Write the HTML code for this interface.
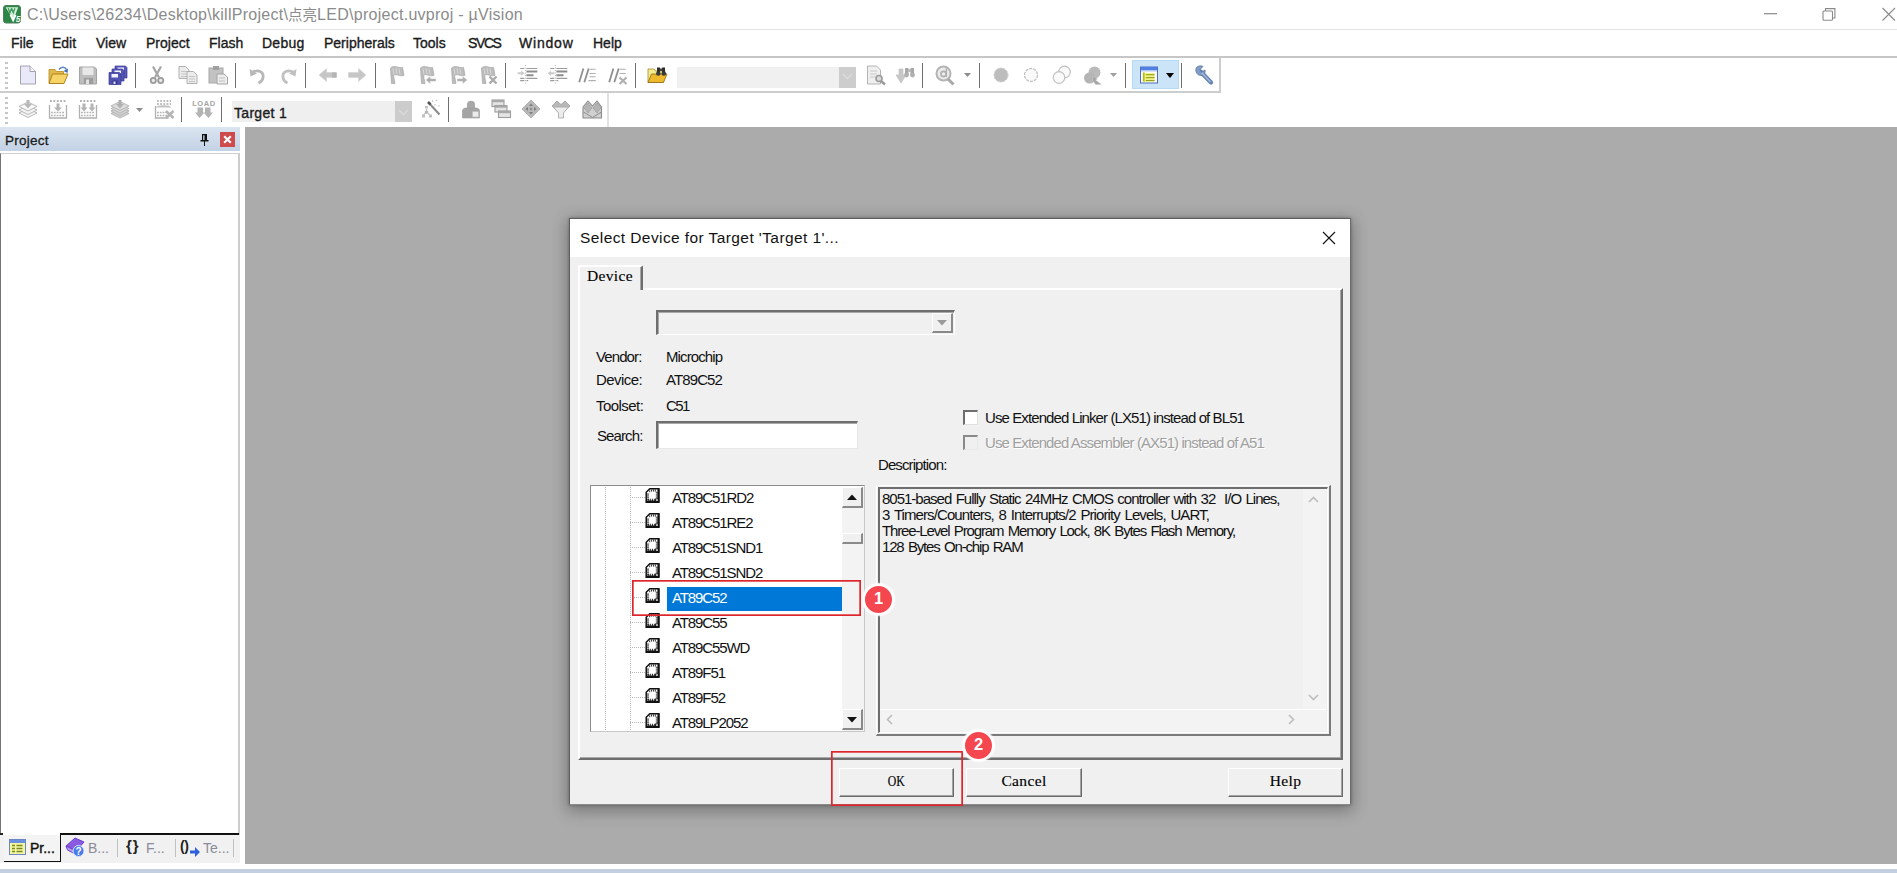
<!DOCTYPE html>
<html lang="en">
<head>
<meta charset="utf-8">
<title>uVision - Select Device</title>
<style>
*{box-sizing:border-box;margin:0;padding:0}
html,body{width:1897px;height:873px;overflow:hidden;background:#fff}
body{position:relative;font-family:"Liberation Sans","Noto Sans CJK SC",sans-serif;font-size:15px;color:#000}
.abs{position:absolute}
.t{position:absolute;white-space:nowrap;line-height:20px;height:20px}
/* main window */
#titletext{left:27px;top:4.500px;font-size:16px;color:#8b8b8b;letter-spacing:.27px}
#menubar .t{top:33px;font-size:14px;color:#1a1a1a;-webkit-text-stroke:0.35px #1a1a1a}
.tsep{position:absolute;width:1.400px;height:25px;background:#6f6f6f}
.grip{position:absolute;width:3px;border-left:3px dotted #c4c4c4}
svg{position:absolute;overflow:visible}
/* dialog */
#dlg{left:569px;top:218px;width:782px;height:587px;background:#f0f0f0;border:1px solid #5e5e5e;border-bottom-color:#8c8c8c;border-right-color:#6c6c6c;box-shadow:0 4px 15px 2px rgba(0,0,0,.30),0 0 3px rgba(0,0,0,.3)}
.ms{font-size:15px;color:#111;letter-spacing:-0.9px}
.sim{font-family:"Liberation Serif","Noto Serif CJK SC",serif;font-size:15.500px;color:#000;-webkit-text-stroke:0.15px #000;letter-spacing:.35px}
.btn{position:absolute;height:29px;background:#f0f0f0;border-top:1px solid #fff;border-left:1px solid #fff;border-right:1px solid #6a6a6a;border-bottom:1px solid #6a6a6a;box-shadow:inset -1px -1px 0 #a2a2a2;text-align:center;line-height:24px}
.tree{font-size:15px;color:#111;letter-spacing:-1.1px}
.chip{position:absolute;width:15px;height:15px}
.hdot{position:absolute;height:1px;width:15px;left:630px;background:repeating-linear-gradient(90deg,#b8b8b8 0 1px,transparent 1px 2px)}
.red{position:absolute;border:1.5px solid #dc262c}
.badge{position:absolute;width:31px;height:31px;border-radius:50%;background:#f5474f;border:2px solid #fff;box-shadow:0 0 1.5px 1px #fff;color:#fff;font-size:16.5px;font-weight:bold;text-align:center;line-height:24px}
</style>
</head>
<body>
<!-- ===== title bar ===== -->
<div class="abs" id="titlebar" style="left:0;top:0;width:1897px;height:29px;background:#fff"></div>
<svg style="left:3px;top:4.500px" width="18" height="18.500" viewBox="0 0 18 18.500"><rect x=".5" y=".5" width="17" height="17.500" rx="2.500" fill="#2c8747" stroke="#4d7f5c"/><path d="M2.600 2.200H15.200L10.400 14.800z" fill="#d3eed9"/><path d="M5.300 3.200l1.600 4.600 1.700-4.600M8.600 3.200l1.700 4.600 1.600-4.600" fill="none" stroke="#3f9a5b" stroke-width="1.300"/><path d="M7.400 9.800l2.700 5.600 2.600-5.600" fill="none" stroke="#fff" stroke-width="1.700"/><text x="12.700" y="16.600" font-size="8.500" font-weight="bold" font-style="italic" fill="#e9f8ec" font-family="Liberation Sans, sans-serif">5</text></svg>
<svg style="left:1764px;top:13px" width="14" height="2" viewBox="0 0 14 2"><path d="M0 .7h13" stroke="#8a8a8a" stroke-width="1.200"/></svg>
<svg style="left:1822px;top:8px" width="14" height="13" viewBox="0 0 14 13"><path d="M3.500 3V.6h9.400V10H10.500" fill="none" stroke="#8a8a8a" stroke-width="1.100"/><rect x="1" y="3" width="9.500" height="9.300" rx="1" fill="#fff" stroke="#8a8a8a" stroke-width="1.100"/></svg>
<svg style="left:1882px;top:8px" width="15" height="13" viewBox="0 0 15 13"><path d="M.5 0l12.500 12.500M13 0L.5 12.500" stroke="#8a8a8a" stroke-width="1.100"/></svg>
<div class="t" id="titletext">C:\Users\26234\Desktop\killProject\<span style="font-size:14.500px;letter-spacing:0">点亮</span>LED\project.uvproj - µVision</div>
<div class="abs" style="left:0;top:29px;width:1897px;height:1px;background:#e4e4e4"></div>
<!-- ===== menu bar ===== -->
<div id="menubar">
<div class="t" style="left:11px">File</div>
<div class="t" style="left:52px">Edit</div>
<div class="t" style="left:96px">View</div>
<div class="t" style="left:146px">Project</div>
<div class="t" style="left:209px">Flash</div>
<div class="t" style="left:262px;letter-spacing:.25px">Debug</div>
<div class="t" style="left:324px">Peripherals</div>
<div class="t" style="left:413px">Tools</div>
<div class="t" style="left:468px;letter-spacing:-1.4px">SVCS</div>
<div class="t" style="left:519px;letter-spacing:.8px">Window</div>
<div class="t" style="left:593px">Help</div>
</div>
<div class="abs" style="left:0;top:56px;width:1897px;height:2px;background:#c6c6c6"></div>
<!-- ===== toolbars ===== -->
<div class="abs" id="tb1" style="left:0;top:58px;width:1221px;height:35px;background:#fff;border-right:2px solid #cdcdcd;border-bottom:2px solid #cdcdcd"></div>
<div class="abs" id="tb2" style="left:0;top:93px;width:609px;height:34px;background:#fff;border-right:2px solid #e2e2e2"></div>
<!-- TB-START -->
<div class="abs" style="left:5px;top:62px;width:2.500px;height:27px;background:repeating-linear-gradient(180deg,#c6c6c6 0 2px,transparent 2px 5px)"></div>
<div class="abs" style="left:5px;top:97px;width:2.500px;height:27px;background:repeating-linear-gradient(180deg,#c6c6c6 0 2px,transparent 2px 5px)"></div>
<div class="tsep" style="left:135px;top:63px"></div>
<div class="tsep" style="left:235px;top:63px"></div>
<div class="tsep" style="left:305px;top:63px"></div>
<div class="tsep" style="left:375px;top:63px"></div>
<div class="tsep" style="left:505px;top:63px"></div>
<div class="tsep" style="left:635px;top:63px"></div>
<div class="tsep" style="left:922px;top:63px"></div>
<div class="tsep" style="left:978.7px;top:63px"></div>
<div class="tsep" style="left:1125px;top:63px"></div>
<div class="tsep" style="left:1181px;top:63px"></div>
<div class="tsep" style="left:181px;top:97px;height:25px"></div>
<div class="tsep" style="left:221px;top:97px;height:25px"></div>
<div class="tsep" style="left:448px;top:97px;height:25px"></div>
<svg style="left:18px;top:64.5px" width="20" height="20" viewBox="0 0 20 20"><path d="M2.500 1h9.500l5.500 5.500V19h-15z" fill="#e9e9fa" stroke="#a2a2b0"/><path d="M12 1v5.500h5.500" fill="#f6f6ff" stroke="#a2a2b0"/></svg>
<svg style="left:47.5px;top:65px" width="20" height="20" viewBox="0 0 20 20"><path d="M1 4.500h6l1.500 2h7V18H1z" fill="#e2b94a" stroke="#b28a22" stroke-width=".8"/><path d="M1 18.500l3.500-9.500H20l-4 9.500z" fill="#f7d468" stroke="#a67c14" stroke-width=".9"/><path d="M11 4.500c2-3 6-3 7.500 0" fill="none" stroke="#5a86c8" stroke-width="1.600"/><path d="M20 3.500l-.5 4.500-4-2z" fill="#3f6fb8"/></svg>
<svg style="left:77.5px;top:65px" width="20" height="20" viewBox="0 0 20 20"><path d="M1.500 2h15l2 2v15h-17z" fill="#bdbdbd" stroke="#a4a4a4"/><rect x="4.500" y="2.500" width="11" height="7.500" fill="#e8e8e8"/><rect x="6" y="13" width="9" height="6" fill="#9c9c9c"/><rect x="8" y="14.500" width="3" height="4.500" fill="#e0e0e0"/></svg>
<svg style="left:107.5px;top:65px" width="20" height="20" viewBox="0 0 20 20"><g transform="translate(7,1)"><path d="M0 0h10.500l1.500 1.500V12H0z" fill="#5858b8" stroke="#3a3a98" stroke-width=".7"/><rect x="2.500" y="1.500" width="6.500" height="3.500" fill="#f2f2ff"/><rect x="3.500" y="8" width="5" height="4" fill="#3a3a90"/><rect x="4.500" y="9" width="2" height="2.500" fill="#e4e4ff"/></g><g transform="translate(4,4)"><path d="M0 0h10.500l1.500 1.500V12H0z" fill="#5555b4" stroke="#3a3a98" stroke-width=".7"/><rect x="2.500" y="1.500" width="6.500" height="3.500" fill="#f2f2ff"/><rect x="3.500" y="8" width="5" height="4" fill="#3a3a90"/><rect x="4.500" y="9" width="2" height="2.500" fill="#e4e4ff"/></g><g transform="translate(1,7.5)"><path d="M0 0h10.500l1.500 1.500V12H0z" fill="#5050b0" stroke="#3a3a98" stroke-width=".7"/><rect x="2.500" y="1.500" width="6.500" height="3.500" fill="#f2f2ff"/><rect x="3.500" y="8" width="5" height="4" fill="#3a3a90"/><rect x="4.500" y="9" width="2" height="2.500" fill="#e4e4ff"/></g></svg>
<svg style="left:147px;top:65px" width="20" height="20" viewBox="0 0 20 20"><path d="M6 1.500l6 11M14 1.500l-6 11" stroke="#a6a6a6" stroke-width="2.200" fill="none"/><circle cx="6.300" cy="15.500" r="2.600" fill="#e8e8e8" stroke="#9c9c9c" stroke-width="1.800"/><circle cx="13.700" cy="15.500" r="2.600" fill="#e8e8e8" stroke="#9c9c9c" stroke-width="1.800"/></svg>
<svg style="left:178px;top:65px" width="20" height="20" viewBox="0 0 20 20"><g transform="translate(1,1.5)"><path d="M0 0h6.500l3.500 3.500V12H0z" fill="#ececec" stroke="#b0b0b0"/><path d="M2 5h6M2 7.500h6M2 10h6" stroke="#c4c4c4"/></g><g transform="translate(9,6.5)"><path d="M0 0h6.500l3.500 3.500V12H0z" fill="#ececec" stroke="#b0b0b0"/><path d="M2 5h6M2 7.500h6M2 10h6" stroke="#c4c4c4"/></g></svg>
<svg style="left:207.5px;top:65px" width="20" height="20" viewBox="0 0 20 20"><rect x="1" y="3" width="14" height="15" fill="#c2c2c2" stroke="#a8a8a8"/><rect x="5" y="1" width="6" height="4" fill="#a0a0a0"/><path d="M9 9h7l3.500 3V19H9z" fill="#ececec" stroke="#a4a4a4"/><path d="M11 13h6M11 16h6" stroke="#c0c0c0"/></svg>
<svg style="left:247.5px;top:65px" width="20" height="20" viewBox="0 0 20 20"><path d="M4 7.500c6-3.500 12-1 11 5-.4 2.500-2 4.500-4.500 5.500" fill="none" stroke="#b8b8b8" stroke-width="2.800"/><path d="M1.500 4l1 7.500 6.500-3z" fill="#b8b8b8"/></svg>
<svg style="left:278px;top:65px" width="20" height="20" viewBox="0 0 20 20"><path d="M16 7.500c-6-3.500-12-1-11 5 .4 2.500 2 4.500 4.500 5.500" fill="none" stroke="#c0c0c0" stroke-width="2.800"/><path d="M18.500 4l-1 7.500-6.500-3z" fill="#c0c0c0"/></svg>
<svg style="left:317.5px;top:64.5px" width="20" height="20" viewBox="0 0 20 20"><path d="M1 10L8.500 3.500V7.500H18.500V12.500H8.500V16.500z" fill="#c6c6c6" stroke="#d4d4d4" stroke-width=".6"/><rect x="14" y="7.500" width="4.500" height="5" fill="#b4b4b4"/></svg>
<svg style="left:347px;top:64.5px" width="20" height="20" viewBox="0 0 20 20"><path d="M19 10L11.500 3.500V7.500H1.500V12.500H11.500V16.500z" fill="#c6c6c6" stroke="#d4d4d4" stroke-width=".6"/></svg>
<svg style="left:387px;top:65px" width="20" height="20" viewBox="0 0 20 20"><path d="M3.500 3c3-2.500 5.500-1.500 7-1 2 .7 3.500.8 5 .3l1.500 8c-2 .8-4 .6-6-.2-1.500-.6-3-.6-4.500.4L8 18.500H4.500z" fill="#bcbcbc" stroke="#a8a8a8" stroke-width=".7"/><path d="M6 3.500l1 6M9 3l1 6M12 3.500l1 6" stroke="#d8d8d8" stroke-width="1"/></svg>
<svg style="left:417px;top:65px" width="20" height="20" viewBox="0 0 20 20"><path d="M3.500 3c3-2.500 5.500-1.500 7-1 2 .7 3.500.8 5 .3l1.500 8c-2 .8-4 .6-6-.2-1.500-.6-3-.6-4.500.4L8 18.500H4.500z" fill="#bcbcbc" stroke="#a8a8a8" stroke-width=".7"/><path d="M6 3.500l1 6M9 3l1 6M12 3.500l1 6" stroke="#d8d8d8" stroke-width="1"/><path d="M8.500 15l5-4v2.500H19v3h-5.500V19z" fill="#b0b0b0" stroke="#fff" stroke-width=".5"/></svg>
<svg style="left:447.5px;top:65px" width="20" height="20" viewBox="0 0 20 20"><path d="M3.500 3c3-2.500 5.500-1.500 7-1 2 .7 3.500.8 5 .3l1.500 8c-2 .8-4 .6-6-.2-1.500-.6-3-.6-4.500.4L8 18.500H4.500z" fill="#bcbcbc" stroke="#a8a8a8" stroke-width=".7"/><path d="M6 3.500l1 6M9 3l1 6M12 3.500l1 6" stroke="#d8d8d8" stroke-width="1"/><path d="M19.500 15l-5-4v2.500H9v3h5.500V19z" fill="#b0b0b0" stroke="#fff" stroke-width=".5"/></svg>
<svg style="left:478px;top:65px" width="20" height="20" viewBox="0 0 20 20"><path d="M3.500 3c3-2.500 5.500-1.500 7-1 2 .7 3.500.8 5 .3l1.500 8c-2 .8-4 .6-6-.2-1.500-.6-3-.6-4.500.4L8 18.500H4.500z" fill="#bcbcbc" stroke="#a8a8a8" stroke-width=".7"/><path d="M6 3.500l1 6M9 3l1 6M12 3.500l1 6" stroke="#d8d8d8" stroke-width="1"/><path d="M11.500 11.500l7 7M18.500 11.500l-7 7" stroke="#aaaaaa" stroke-width="2.400"/></svg>
<svg style="left:518px;top:65px" width="20" height="20" viewBox="0 0 20 20"><path d="M2.200 3.500H6.300M8.400 3.500H19.300M2.200 13.300H6.300M8.400 13.300H19.300M2.200 15.700H6.300M8.400 15.700H10.200" stroke="#9c9c9c" stroke-width="1.200"/><path d="M8.400 6.500H19.300M8.400 10.200H15.500" stroke="#8c8c8c" stroke-width="2"/><path d="M7.400 0v18.500" stroke="#b4b4b4" stroke-width="1" stroke-dasharray="1 1.500"/><path d="M-.3 7.300h3.500V5.500l3.200 2.800-3.200 2.800V9.300H-.3z" fill="#cacaca"/></svg>
<svg style="left:548px;top:65px" width="20" height="20" viewBox="0 0 20 20"><path d="M2.200 3.500H6.300M8.400 3.500H19.300M2.200 13.300H6.300M8.400 13.300H19.300M2.200 15.700H6.300M8.400 15.700H10.200" stroke="#9c9c9c" stroke-width="1.200"/><path d="M8.400 6.500H19.300M8.400 10.200H15.500" stroke="#8c8c8c" stroke-width="2"/><path d="M7.400 0v18.500" stroke="#b4b4b4" stroke-width="1" stroke-dasharray="1 1.500"/><path d="M6.400 7.300H2.900V5.500L-.3 8.300l3.200 2.800V9.300h3.500z" fill="#cacaca"/></svg>
<svg style="left:578px;top:65px" width="20" height="20" viewBox="0 0 20 20"><path d="M1.200 17.300L5.400 3.500M6.300 17.300L10.700 3.500" stroke="#909090" stroke-width="1.800"/><path d="M11.500 4.300h6.200M11.500 8.500h6.200M11.500 11.800h6.200M10.500 15.600h7.200" stroke="#b0b0b0" stroke-width="1.100"/></svg>
<svg style="left:608px;top:65px" width="20" height="20" viewBox="0 0 20 20"><path d="M1.200 17.300L5.400 3.500M6.300 17.300L10.700 3.500" stroke="#909090" stroke-width="1.800"/><path d="M11.500 4.300h6.200M11.500 8.500h6.200" stroke="#b0b0b0" stroke-width="1.100"/><path d="M11.500 12.500l7 6.500M18.500 12.500l-7 6.500" stroke="#b0b0b0" stroke-width="2.200"/></svg>
<svg style="left:647px;top:65px" width="20" height="20" viewBox="0 0 20 20"><path d="M1 4h6l1.500 2H16V17.500H1z" fill="#f3ec8e" stroke="#a88a28" stroke-width=".8"/><path d="M1 17.500l3.500-8.500h15.500l-3.500 8.500z" fill="#eeb92c" stroke="#8c6a14" stroke-width=".8"/><path d="M10 2.500h3v6h-3zM15 2.500h3v6h-3z" fill="#2a2a2a"/><rect x="12.500" y="3.500" width="3" height="2.500" fill="#444"/><circle cx="11.300" cy="8.500" r="2.300" fill="#3a3a3a"/><circle cx="16.800" cy="8.500" r="2.300" fill="#3a3a3a"/></svg>
<div class="abs" style="left:677px;top:67px;width:162px;height:20.500px;background:#f0f0f0"></div>
<div class="abs" style="left:839px;top:67px;width:17px;height:20.500px;background:#cdcdcd"></div>
<svg style="left:842px;top:73px" width="11" height="7" viewBox="0 0 11 7"><path d="M1 1l4.500 4.500L10 1" fill="none" stroke="#dcdcdc" stroke-width="1.400"/></svg>
<svg style="left:865.5px;top:65px" width="20" height="20" viewBox="0 0 20 20"><path d="M1.500 1h9l4 4v14h-13z" fill="#efefef" stroke="#b4b4b4"/><path d="M4 6h7M4 9h7M4 12h5" stroke="#c8c8c8"/><circle cx="13" cy="13.500" r="3" fill="#dcdcdc" stroke="#9a9a9a" stroke-width="1.600"/><path d="M15 16l4 3.500" stroke="#9a9a9a" stroke-width="2.400"/></svg>
<svg style="left:895px;top:65px" width="20" height="20" viewBox="0 0 20 20"><path d="M1 10h3V4h4v6h3l-5 8z" fill="#c8c8c8" stroke="#bdbdbd" stroke-width=".6"/><path d="M10 3h3.500v7H10zM15.500 3H19v7h-3.500z" fill="#a8a8a8"/><rect x="13" y="4" width="3" height="3" fill="#bcbcbc"/><circle cx="11.500" cy="10" r="2.400" fill="#b0b0b0"/><circle cx="17.500" cy="10" r="2.400" fill="#b0b0b0"/></svg>
<svg style="left:935px;top:65px" width="20" height="20" viewBox="0 0 20 20"><circle cx="8.500" cy="8.500" r="7" fill="#ececec" stroke="#b4b4b4" stroke-width="2"/><circle cx="8.500" cy="9" r="2.600" fill="none" stroke="#b0b0b0" stroke-width="1.600"/><path d="M11.300 3.500v8.500" stroke="#b0b0b0" stroke-width="1.600"/><path d="M13 14l5.500 5.500" stroke="#a8a8a8" stroke-width="3"/></svg>
<svg style="left:963.500px;top:73px" width="7" height="4" viewBox="0 0 7 4"><path d="M0 0h7L3.500 4z" fill="#8c8c8c"/></svg>
<svg style="left:991px;top:65px" width="20" height="20" viewBox="0 0 20 20"><circle cx="10" cy="10" r="7" fill="#bdbdbd" stroke="#cacaca" stroke-dasharray="2 1.500"/></svg>
<svg style="left:1021px;top:65px" width="20" height="20" viewBox="0 0 20 20"><circle cx="10" cy="10" r="6.500" fill="#fafafa" stroke="#c2c2c2" stroke-width="1.300" stroke-dasharray="3 1"/></svg>
<svg style="left:1051.5px;top:65px" width="20" height="20" viewBox="0 0 20 20"><circle cx="12.500" cy="7" r="5.800" fill="#fafafa" stroke="#c2c2c2" stroke-width="1.200"/><circle cx="7" cy="12.500" r="5.800" fill="#fafafa" stroke="#c2c2c2" stroke-width="1.200"/></svg>
<svg style="left:1083px;top:65px" width="20" height="20" viewBox="0 0 20 20"><circle cx="11.500" cy="7.500" r="6" fill="#bababa"/><circle cx="6.500" cy="13" r="5.500" fill="#b4b4b4"/><path d="M10 11l4.500 3-2 1 6 4.500h-6l-2-3-1.500 2z" fill="#a4a4a4" stroke="#d0d0d0" stroke-width=".5"/></svg>
<svg style="left:1109.500px;top:73px" width="7" height="4" viewBox="0 0 7 4"><path d="M0 0h7L3.500 4z" fill="#a0a0a0"/></svg>
<div class="abs" style="left:1132px;top:60px;width:47px;height:29px;background:#cce4f7;border:1px solid #b9daf5"></div>
<svg style="left:1139px;top:64.5px" width="20" height="20" viewBox="0 0 20 20"><rect x="1.500" y="2" width="17" height="16" fill="#fbfbf4" stroke="#4f6cc0"/><rect x="1.500" y="2" width="17" height="3.500" fill="#4f7fe2"/><rect x="2" y="5.300" width="16" height="1.200" fill="#b9cbf2"/><path d="M4.800 7.500v9" stroke="#d9de2e" stroke-width="2"/><path d="M5.500 9.700h10M5.500 12.600h10M5.500 15.500h10" stroke="#e3e838" stroke-width="2.200"/><path d="M7 9.700h8.500M7 12.600h8.500M7 15.500h8.500" stroke="#7f8c22" stroke-width=".8"/><path d="M4.800 7.500v9" stroke="#8a962a" stroke-width=".7"/></svg>
<svg style="left:1165.500px;top:73px" width="8" height="5" viewBox="0 0 8 5"><path d="M0 0h8L4 5z" fill="#000"/></svg>
<svg style="left:1194px;top:65px" width="20" height="20" viewBox="0 0 20 20"><path d="M6.500 6.500L17 17.500" stroke="#6785b1" stroke-width="4.400" stroke-linecap="round"/><path d="M2 3.500c1-2.500 4.500-3.500 7-2L6 4.500l1.500 2.500L11 5c.8 2.800-1.200 5.500-4 5.500C3.500 10.500 1 7 2 3.500z" fill="#7f9cc6" stroke="#56719c" stroke-width=".7"/><path d="M8 8l8.500 9" stroke="#a9bfdc" stroke-width="1.200"/></svg>
<svg style="left:18px;top:98.5px" width="20" height="20" viewBox="0 0 20 20"><path d="M1 14l9-4.500 9 4.500-9 4.500z" fill="#f4f4f4" stroke="#b0b0b0" stroke-width=".9"/><path d="M1 11l9-4.500 9 4.500-9 4.500z" fill="#f4f4f4" stroke="#b0b0b0" stroke-width=".9"/><path d="M1 7.5l9-4.500 9 4.500-9 4.500z" fill="#f8f8f8" stroke="#b0b0b0" stroke-width=".9"/><path d="M8.500 1h3v4h2.500l-4 4.500L6 5h2.500z" fill="#b8b8b8"/></svg>
<svg style="left:48px;top:98.5px" width="20" height="20" viewBox="0 0 20 20"><path d="M1.500 6v13h17V6" fill="none" stroke="#b0b0b0" stroke-width="1.300"/><path d="M3 13.500h14M3 16.500h14" stroke="#b4b4b4" stroke-width="1.600" stroke-dasharray="1.800 1"/><path d="M2 2h16" stroke="#b0b0b0" stroke-width="2" stroke-dasharray="1.800 1.600"/><path d="M8.500 4.500h3v4h2.500l-4 4-4-4h2.500z" fill="#b4b4b4"/></svg>
<svg style="left:78px;top:98.5px" width="20" height="20" viewBox="0 0 20 20"><path d="M1.500 6v13h17V6" fill="none" stroke="#b0b0b0" stroke-width="1.300"/><path d="M3 13.500h14M3 16.500h14" stroke="#b4b4b4" stroke-width="1.600" stroke-dasharray="1.800 1"/><path d="M2 2h16" stroke="#b0b0b0" stroke-width="2" stroke-dasharray="1.800 1.600"/><path d="M4.500 4.500h3v4H9.500l-3.500 4-3.500-4h2zM12.500 4.500h3v4h2l-3.500 4-3.500-4h2z" fill="#b4b4b4"/></svg>
<svg style="left:109.5px;top:98.5px" width="20" height="20" viewBox="0 0 20 20"><path d="M1 14.5l9-4.500 9 4.500-9 4.500z" fill="#d0d0d0" stroke="#b0b0b0" stroke-width=".9"/><path d="M1 12l9-4.500 9 4.500-9 4.500z" fill="#d4d4d4" stroke="#b0b0b0" stroke-width=".9"/><path d="M1 9.5l9-4.500 9 4.500-9 4.500z" fill="#d8d8d8" stroke="#b0b0b0" stroke-width=".9"/><path d="M1 7l9-4.500 9 4.500-9 4.500z" fill="#dedede" stroke="#b0b0b0" stroke-width=".9"/><path d="M8.500 1h3v4h2.500l-4 4.500L6 5h2.500z" fill="#b0b0b0"/></svg>
<svg style="left:135.500px;top:108px" width="7" height="4" viewBox="0 0 7 4"><path d="M0 0h7L3.500 4z" fill="#8c8c8c"/></svg>
<svg style="left:153.7px;top:98.5px" width="20" height="20" viewBox="0 0 20 20"><path d="M1.500 7v12h13" fill="none" stroke="#b0b0b0" stroke-width="1.300"/><path d="M3 2h14M3 5h14" stroke="#bcbcbc" stroke-width="1.800" stroke-dasharray="1.800 1.400"/><path d="M2 8.500h15c.5-3-15-3-15 0z" fill="#c4c4c4"/><path d="M3 13.500h10M3 16.500h10" stroke="#b4b4b4" stroke-width="1.600" stroke-dasharray="1.800 1"/><path d="M12 12l7.500 7M19.500 12L12 19" stroke="#b4b4b4" stroke-width="2.400"/></svg>
<svg style="left:194px;top:98.5px" width="20" height="20" viewBox="0 0 20 20"><text x="10" y="6.500" font-size="7.500" font-family="Liberation Sans, sans-serif" font-weight="bold" fill="#a4a4a4" text-anchor="middle" letter-spacing=".6">LOAD</text><path d="M3.500 8.500h5.500v5h2V8.500h5.500v5H19l-4.500 5.500L10 14l-4.500 5L1 13.500h2.500z" fill="#b4b4b4"/></svg>
<div class="abs" style="left:232px;top:101.300px;width:163px;height:21.200px;background:#efefef"></div>
<div class="abs" style="left:395px;top:101.300px;width:17px;height:21.200px;background:#cccccc"></div>
<svg style="left:398px;top:109px" width="11" height="7" viewBox="0 0 11 7"><path d="M1 1l4.500 4.500L10 1" fill="none" stroke="#dadada" stroke-width="1.400"/></svg>
<div class="t" id="tgt" style="left:234px;top:103px;font-size:14px;color:#1a1a1a;-webkit-text-stroke:.35px #1a1a1a;letter-spacing:.3px">Target 1</div>
<svg style="left:421px;top:99px" width="20" height="20" viewBox="0 0 20 20"><path d="M7.500 3.500L18.500 15.500" stroke="#8a8a8a" stroke-width="2"/><path d="M7 3l2.500 2.500" stroke="#555" stroke-width="2.600"/><path d="M11 1.500l1 1M15 1l1 .8M13.500 5.500l1 .8M17.500 6.500l1 .8" stroke="#bcbcbc" stroke-width="1.400"/><rect x="4" y="7" width="3" height="2.500" fill="#c4c4c4"/><path d="M5.500 10v3M2.500 16l3-3 3.500 3" fill="none" stroke="#c0c0c0" stroke-width="1.200"/><rect x="4" y="11.500" width="3" height="3" fill="#b4b4b4" transform="rotate(45 5.500 13)"/><rect x="1" y="15.500" width="3" height="3" fill="#c0c0c0"/><rect x="8" y="15.500" width="3" height="3" fill="#c0c0c0"/></svg>
<svg style="left:461px;top:99px" width="20" height="20" viewBox="0 0 20 20"><path d="M6 5c0-4.500 8-4.500 8 0v4H6z" fill="#a8a8a8"/><path d="M1.500 19v-7c0-2 1.500-3 3.500-3h10c2 0 3.500 1 3.500 3v7z" fill="#a4a4a4" stroke="#9a9a9a" stroke-width=".6"/><rect x="11.500" y="12.500" width="6" height="5.500" fill="#ececec" stroke="#bcbcbc" stroke-width=".6"/></svg>
<svg style="left:490.5px;top:99px" width="20" height="20" viewBox="0 0 20 20"><g transform="translate(1,1)"><rect width="12" height="6.500" fill="#e4e4e4" stroke="#9c9c9c" stroke-width="1.100"/><rect width="12" height="2.200" fill="#a8a8a8"/></g><g transform="translate(4,6.5)"><rect width="12" height="6.500" fill="#e4e4e4" stroke="#9c9c9c" stroke-width="1.100"/><rect width="12" height="2.200" fill="#a8a8a8"/></g><g transform="translate(7.5,12)"><rect width="12" height="6.500" fill="#e4e4e4" stroke="#9c9c9c" stroke-width="1.100"/><rect width="12" height="2.200" fill="#a8a8a8"/></g></svg>
<svg style="left:520.5px;top:99px" width="20" height="20" viewBox="0 0 20 20"><path d="M10 1l9 9-9 9-9-9z" fill="#b8b8b8" stroke="#a4a4a4" stroke-width=".8"/><path d="M10 4.500l2 2.500h-4zM10 15.500l2-2.500h-4zM4.500 10l2.500-2v4zM15.500 10l-2.500-2v4z" fill="#7e7e7e"/><circle cx="10" cy="10" r="1.200" fill="#8a8a8a"/></svg>
<svg style="left:551px;top:99px" width="20" height="20" viewBox="0 0 20 20"><path d="M1 7l5-5 4 3.500L14 2l5 5-5.500 5.500h-7z" fill="#b8b8b8" stroke="#a0a0a0" stroke-width=".8"/><path d="M2.500 8h15l-5 6v5h-5v-5z" fill="#ececec" stroke="#ababab" stroke-width=".9"/></svg>
<svg style="left:581.5px;top:99px" width="20" height="20" viewBox="0 0 20 20"><path d="M1 8l5-6 4.500 5L15 2l4.500 6v11H1z" fill="#d0d0d0" stroke="#8c8c8c" stroke-width="1.100"/><path d="M6 4l4 5-4 5-4-5zM15 4l4 5-4 5-4-5z" fill="#b4b4b4" stroke="#8e8e8e" stroke-width=".7" stroke-dasharray="1.500 .8"/><path d="M1.500 13l9 5.500 9-5.500" fill="none" stroke="#8c8c8c" stroke-width="1"/></svg>
<!-- TB-END -->
<!-- ===== MDI gray ===== -->
<div class="abs" style="left:245px;top:127px;width:1652px;height:737px;background:#ababab"></div>
<!-- ===== project panel ===== -->

<div class="abs" style="left:0;top:127px;width:240px;height:24px;background:linear-gradient(#dbe5f1,#c9d7e8 70%,#c3d2e5)"></div>
<div class="t" style="left:5px;top:130.500px;font-size:13.500px;letter-spacing:.25px;color:#1a1a1a;-webkit-text-stroke:0.3px #1a1a1a">Project</div>
<svg style="left:198px;top:133px" width="12" height="14" viewBox="0 0 12 14"><path d="M4 1h5v6h1.5v1.5H7V13H6V8.500H2.500V7H4z M5.200 2.200V7H6.500V2.200z" fill="#111" fill-rule="evenodd"/></svg>
<div class="abs" style="left:220px;top:132px;width:15px;height:15px;background:#cf4a4a"></div>
<svg style="left:220px;top:132px" width="15" height="15" viewBox="0 0 15 15"><path d="M4.200 4.200L10.800 10.800M10.800 4.200L4.200 10.800" stroke="#fff" stroke-width="2.200"/></svg>
<div class="abs" style="left:0;top:153px;width:240px;height:682px;background:#fff;border-top:1px solid #cfcfcf;border-right:2px solid #cdcdcd;border-left:1px solid #747474"></div>
<div class="abs" style="left:0;top:835px;width:240px;height:28px;background:#f1f1f1"></div>
<div class="abs" style="left:60px;top:833.400px;width:179px;height:1.600px;background:#111"></div>
<div class="abs" style="left:0;top:833px;width:3px;height:2px;background:#222"></div>
<div class="abs" style="left:4px;top:835px;width:56px;height:26.500px;background:#f4f4f4"></div><div class="abs" style="left:59.600px;top:833.400px;width:1.600px;height:29px;background:#111"></div><div class="abs" style="left:4px;top:860.800px;width:57px;height:1.600px;background:#111"></div>
<svg style="left:9px;top:839px" width="17" height="16" viewBox="0 0 17 16"><rect x="0.500" y="0.500" width="16" height="15" fill="#f3f6a0" stroke="#6d86c8"/><rect x="1" y="1" width="15" height="3" fill="#6a8fe0"/><path d="M3 6.500h3M3 9.500h3M3 12.500h3M7.500 6.500h6M7.500 9.500h6M7.500 12.500h6" stroke="#7a8a20" stroke-width="1.300"/></svg>
<div class="t" style="left:30px;top:838px;font-size:14px;color:#111;-webkit-text-stroke:0.4px #111">Pr...</div>
<svg style="left:65px;top:837px" width="21" height="21" viewBox="0 0 21 21"><path d="M1 9L10 1l9 4-8 9z" fill="#8a5be0" stroke="#6a3fc8"/><path d="M1 9l1.500 4L12 18l-1-4z" fill="#b79bf0" stroke="#6a3fc8"/><circle cx="13.500" cy="14" r="5.500" fill="#4a7be8" stroke="#d9e4ff"/><text x="13.500" y="18" font-size="10" font-weight="bold" fill="#fff" text-anchor="middle" font-family="Liberation Sans, sans-serif">?</text></svg>
<div class="t" style="left:88px;top:838px;font-size:14px;color:#8c8c98">B...</div>
<div class="abs" style="left:117px;top:839px;width:1px;height:18px;background:#c0c0c0"></div>
<div class="t" style="left:126px;top:836px;font-size:15px;font-weight:bold;color:#222;letter-spacing:1px">{}</div>
<div class="t" style="left:146px;top:838px;font-size:14px;color:#8c8c98">F...</div>
<div class="abs" style="left:175px;top:839px;width:1px;height:18px;background:#c0c0c0"></div>
<div class="t" style="left:180px;top:836px;font-size:15px;font-weight:bold;color:#222;letter-spacing:-.3px;font-size:14px">()</div>
<svg style="left:190px;top:847px" width="10" height="10" viewBox="0 0 10 10"><path d="M0 3.500h5V0l5 5-5 5V6.500H0z" fill="#2f5fd8"/></svg>
<div class="t" style="left:203px;top:838px;font-size:14px;color:#8c8c98">Te...</div>
<div class="abs" style="left:233px;top:839px;width:1px;height:18px;background:#c0c0c0"></div>

<!-- ===== status strip ===== -->
<div class="abs" style="left:0;top:869px;width:1897px;height:4px;background:#c3cfdf"></div>
<!-- ===== dialog ===== -->
<div class="abs" id="dlg"></div>
<!-- DIALOG-START -->
<div class="abs" style="left:570px;top:219px;width:780px;height:38px;background:#fff"></div>
<div class="t" id="dlgtitle" style="left:580px;top:228px;font-size:15.500px;color:#111;letter-spacing:.41px">Select Device for Target 'Target 1'...</div>
<svg style="left:1322px;top:231px" width="14" height="14" viewBox="0 0 14 14"><path d="M1 1L13 13M13 1L1 13" stroke="#111" stroke-width="1.100"/></svg>
<div class="abs" style="left:578px;top:288px;width:765px;height:472px;border-left:2px solid #fff;border-top:2px solid #fff;border-right:2px solid #6e6e6e;border-bottom:2px solid #6e6e6e;box-shadow:inset -1px -1px 0 #a8a8a8"></div>
<div class="abs" style="left:578px;top:265px;width:65px;height:25px;background:#f0f0f0;border-left:2px solid #fff;border-top:2px solid #fff;border-right:2px solid #6e6e6e;border-radius:2px 2px 0 0;box-shadow:inset -1px 0 0 #a8a8a8"></div>
<div class="t sim" style="left:587px;top:266px">Device</div>
<div class="abs" style="left:656px;top:310px;width:299px;height:25px;background:#f0f0f0;border-left:2px solid #6e6e6e;border-top:2px solid #6e6e6e;border-right:1px solid #fff;border-bottom:1px solid #fff;box-shadow:inset 1px 1px 0 #a8a8a8"></div>
<div class="abs" style="left:932px;top:313px;width:21px;height:20px;background:#f0f0f0;border-left:1px solid #fff;border-top:1px solid #fff;border-right:2px solid #8a8a8a;border-bottom:2px solid #8a8a8a"></div>
<svg style="left:937px;top:320px" width="10" height="6" viewBox="0 0 10 6"><path d="M0 0h10L5 5.500z" fill="#9a9a9a"/></svg>
<div class="t ms" id="l1" style="left:596px;top:347px">Vendor:</div>
<div class="t ms" id="l2" style="letter-spacing:-.55px;left:596px;top:370px">Device:</div>
<div class="t ms" id="l3" style="letter-spacing:-.55px;left:596px;top:396px">Toolset:</div>
<div class="t ms" id="l4" style="left:597px;top:426px">Search:</div>
<div class="t ms" id="v1" style="left:666px;top:347px">Microchip</div>
<div class="t ms" id="v2" style="left:666px;top:370px">AT89C52</div>
<div class="t ms" id="v3" style="letter-spacing:-1.6px;left:666px;top:396px">C51</div>
<div class="abs" style="left:656px;top:421px;width:202px;height:28px;background:#fff;border-left:2px solid #6e6e6e;border-top:2px solid #6e6e6e;border-right:1px solid #e8e8e8;border-bottom:1px solid #e8e8e8;box-shadow:inset 1px 1px 0 #a8a8a8"></div>
<div class="abs" style="left:963px;top:410px;width:15px;height:15px;background:#fff;border-left:2px solid #6e6e6e;border-top:2px solid #6e6e6e;border-right:1px solid #e0e0e0;border-bottom:1px solid #e0e0e0"></div>
<div class="t ms" id="c1" style="left:985px;top:408px">Use Extended Linker (LX51) instead of BL51</div>
<div class="abs" style="left:963px;top:435px;width:15px;height:15px;background:#f0f0f0;border-left:2px solid #8a8a8a;border-top:2px solid #8a8a8a;border-right:1px solid #e8e8e8;border-bottom:1px solid #e8e8e8"></div>
<div class="t ms" id="c2" style="left:985px;top:433px;color:#a0a0a0;text-shadow:1px 1px 0 #fff">Use Extended Assembler (AX51) instead of A51</div>
<div class="t ms" id="desc" style="left:878px;top:455px">Description:</div>
<div class="abs" style="left:590px;top:485px;width:275px;height:247px;background:#fff;border:1px solid #8c8c8c;border-right-color:#c8c8c8;border-bottom-color:#c8c8c8"></div>
<div class="abs" style="left:605px;top:487px;width:1px;height:244px;background:repeating-linear-gradient(180deg,#bcbcbc 0 1px,transparent 1px 2px)"></div>
<div class="abs" style="left:630px;top:487px;width:1px;height:244px;background:repeating-linear-gradient(180deg,#bcbcbc 0 1px,transparent 1px 2px)"></div>
<div class="abs" style="left:842px;top:487px;width:22px;height:244px;background:#f3f3f3"></div>
<div class="abs" style="left:842px;top:487px;width:21px;height:21px;background:#f0f0f0;border-left:1px solid #fff;border-top:1px solid #fff;border-right:2px solid #8a8a8a;border-bottom:2px solid #8a8a8a"></div>
<svg style="left:847px;top:494px" width="10" height="6" viewBox="0 0 10 6"><path d="M0 6h10L5 0.500z" fill="#111"/></svg>
<div class="abs" style="left:842px;top:533px;width:21px;height:11px;background:#f0f0f0;border-left:1px solid #fff;border-top:1px solid #fff;border-right:2px solid #8a8a8a;border-bottom:2px solid #8a8a8a"></div>
<div class="abs" style="left:842px;top:709px;width:21px;height:21px;background:#f0f0f0;border-left:1px solid #fff;border-top:1px solid #fff;border-right:2px solid #8a8a8a;border-bottom:2px solid #8a8a8a"></div>
<svg style="left:847px;top:717px" width="10" height="6" viewBox="0 0 10 6"><path d="M0 0h10L5 5.500z" fill="#111"/></svg>
<div class="hdot" style="top:497px"></div>
<svg class="chip" style="left:645px;top:488px" width="15" height="16" viewBox="0 0 15 16"><path d="M4.600 .8H14.200V15.200H.8V4.600z" fill="#fff" stroke="#111" stroke-width="1.600"/><path d="M.5 14.400H15M13.900 .5V15.500" stroke="#111" stroke-width="2.200"/><path d="M1.500 6.500H3.800M1.500 8.500H3.800M1.500 10.500H3.800M1.500 12.500H3.800M11 4.500H13.500M11 6.500H13.500M11 8.500H13.500M11 10.500H13.500" stroke="#222" stroke-width="1"/><path d="M6.500 1.500V3.800M8.500 1.500V3.800M10.500 1.500V3.800M4.500 2.500V4.500M3.500 11.500V14M5.500 11.500V14M7.500 11.500V14M9.500 11.500V14" stroke="#222" stroke-width="1"/><rect x="10.300" y="11.200" width="4" height="4" fill="#111"/><rect x="11.400" y="12" width="1.700" height="1.700" fill="#fff"/></svg>
<div class="t tree" id="tr0" style="left:672px;top:488px">AT89C51RD2</div>
<div class="hdot" style="top:522px"></div>
<svg class="chip" style="left:645px;top:513px" width="15" height="16" viewBox="0 0 15 16"><path d="M4.600 .8H14.200V15.200H.8V4.600z" fill="#fff" stroke="#111" stroke-width="1.600"/><path d="M.5 14.400H15M13.900 .5V15.500" stroke="#111" stroke-width="2.200"/><path d="M1.500 6.500H3.800M1.500 8.500H3.800M1.500 10.500H3.800M1.500 12.500H3.800M11 4.500H13.500M11 6.500H13.500M11 8.500H13.500M11 10.500H13.500" stroke="#222" stroke-width="1"/><path d="M6.500 1.500V3.800M8.500 1.500V3.800M10.500 1.500V3.800M4.500 2.500V4.500M3.500 11.500V14M5.500 11.500V14M7.500 11.500V14M9.500 11.500V14" stroke="#222" stroke-width="1"/><rect x="10.300" y="11.200" width="4" height="4" fill="#111"/><rect x="11.400" y="12" width="1.700" height="1.700" fill="#fff"/></svg>
<div class="t tree" id="tr1" style="left:672px;top:513px">AT89C51RE2</div>
<div class="hdot" style="top:547px"></div>
<svg class="chip" style="left:645px;top:538px" width="15" height="16" viewBox="0 0 15 16"><path d="M4.600 .8H14.200V15.200H.8V4.600z" fill="#fff" stroke="#111" stroke-width="1.600"/><path d="M.5 14.400H15M13.900 .5V15.500" stroke="#111" stroke-width="2.200"/><path d="M1.500 6.500H3.800M1.500 8.500H3.800M1.500 10.500H3.800M1.500 12.500H3.800M11 4.500H13.500M11 6.500H13.500M11 8.500H13.500M11 10.500H13.500" stroke="#222" stroke-width="1"/><path d="M6.500 1.500V3.800M8.500 1.500V3.800M10.500 1.500V3.800M4.500 2.500V4.500M3.500 11.500V14M5.500 11.500V14M7.500 11.500V14M9.500 11.500V14" stroke="#222" stroke-width="1"/><rect x="10.300" y="11.200" width="4" height="4" fill="#111"/><rect x="11.400" y="12" width="1.700" height="1.700" fill="#fff"/></svg>
<div class="t tree" id="tr2" style="left:672px;top:538px">AT89C51SND1</div>
<div class="hdot" style="top:572px"></div>
<svg class="chip" style="left:645px;top:563px" width="15" height="16" viewBox="0 0 15 16"><path d="M4.600 .8H14.200V15.200H.8V4.600z" fill="#fff" stroke="#111" stroke-width="1.600"/><path d="M.5 14.400H15M13.900 .5V15.500" stroke="#111" stroke-width="2.200"/><path d="M1.500 6.500H3.800M1.500 8.500H3.800M1.500 10.500H3.800M1.500 12.500H3.800M11 4.500H13.500M11 6.500H13.500M11 8.500H13.500M11 10.500H13.500" stroke="#222" stroke-width="1"/><path d="M6.500 1.500V3.800M8.500 1.500V3.800M10.500 1.500V3.800M4.500 2.500V4.500M3.500 11.500V14M5.500 11.500V14M7.500 11.500V14M9.500 11.500V14" stroke="#222" stroke-width="1"/><rect x="10.300" y="11.200" width="4" height="4" fill="#111"/><rect x="11.400" y="12" width="1.700" height="1.700" fill="#fff"/></svg>
<div class="t tree" id="tr3" style="left:672px;top:563px">AT89C51SND2</div>
<div class="hdot" style="top:597px"></div>
<svg class="chip" style="left:645px;top:588px" width="15" height="16" viewBox="0 0 15 16"><path d="M4.600 .8H14.200V15.200H.8V4.600z" fill="#fff" stroke="#111" stroke-width="1.600"/><path d="M.5 14.400H15M13.900 .5V15.500" stroke="#111" stroke-width="2.200"/><path d="M1.500 6.500H3.800M1.500 8.500H3.800M1.500 10.500H3.800M1.500 12.500H3.800M11 4.500H13.500M11 6.500H13.500M11 8.500H13.500M11 10.500H13.500" stroke="#222" stroke-width="1"/><path d="M6.500 1.500V3.800M8.500 1.500V3.800M10.500 1.500V3.800M4.500 2.500V4.500M3.500 11.500V14M5.500 11.500V14M7.500 11.500V14M9.500 11.500V14" stroke="#222" stroke-width="1"/><rect x="10.300" y="11.200" width="4" height="4" fill="#111"/><rect x="11.400" y="12" width="1.700" height="1.700" fill="#fff"/></svg>
<div class="abs" style="left:667px;top:587px;width:175px;height:24px;background:#0078d7"></div>
<div class="t tree" style="left:672px;top:588px;color:#fff">AT89C52</div>
<div class="hdot" style="top:622px"></div>
<svg class="chip" style="left:645px;top:613px" width="15" height="16" viewBox="0 0 15 16"><path d="M4.600 .8H14.200V15.200H.8V4.600z" fill="#fff" stroke="#111" stroke-width="1.600"/><path d="M.5 14.400H15M13.900 .5V15.500" stroke="#111" stroke-width="2.200"/><path d="M1.500 6.500H3.800M1.500 8.500H3.800M1.500 10.500H3.800M1.500 12.500H3.800M11 4.500H13.500M11 6.500H13.500M11 8.500H13.500M11 10.500H13.500" stroke="#222" stroke-width="1"/><path d="M6.500 1.500V3.800M8.500 1.500V3.800M10.500 1.500V3.800M4.500 2.500V4.500M3.500 11.500V14M5.500 11.500V14M7.500 11.500V14M9.500 11.500V14" stroke="#222" stroke-width="1"/><rect x="10.300" y="11.200" width="4" height="4" fill="#111"/><rect x="11.400" y="12" width="1.700" height="1.700" fill="#fff"/></svg>
<div class="t tree" id="tr5" style="left:672px;top:613px">AT89C55</div>
<div class="hdot" style="top:647px"></div>
<svg class="chip" style="left:645px;top:638px" width="15" height="16" viewBox="0 0 15 16"><path d="M4.600 .8H14.200V15.200H.8V4.600z" fill="#fff" stroke="#111" stroke-width="1.600"/><path d="M.5 14.400H15M13.900 .5V15.500" stroke="#111" stroke-width="2.200"/><path d="M1.500 6.500H3.800M1.500 8.500H3.800M1.500 10.500H3.800M1.500 12.500H3.800M11 4.500H13.500M11 6.500H13.500M11 8.500H13.500M11 10.500H13.500" stroke="#222" stroke-width="1"/><path d="M6.500 1.500V3.800M8.500 1.500V3.800M10.500 1.500V3.800M4.500 2.500V4.500M3.500 11.500V14M5.500 11.500V14M7.500 11.500V14M9.500 11.500V14" stroke="#222" stroke-width="1"/><rect x="10.300" y="11.200" width="4" height="4" fill="#111"/><rect x="11.400" y="12" width="1.700" height="1.700" fill="#fff"/></svg>
<div class="t tree" id="tr6" style="left:672px;top:638px">AT89C55WD</div>
<div class="hdot" style="top:672px"></div>
<svg class="chip" style="left:645px;top:663px" width="15" height="16" viewBox="0 0 15 16"><path d="M4.600 .8H14.200V15.200H.8V4.600z" fill="#fff" stroke="#111" stroke-width="1.600"/><path d="M.5 14.400H15M13.900 .5V15.500" stroke="#111" stroke-width="2.200"/><path d="M1.500 6.500H3.800M1.500 8.500H3.800M1.500 10.500H3.800M1.500 12.500H3.800M11 4.500H13.500M11 6.500H13.500M11 8.500H13.500M11 10.500H13.500" stroke="#222" stroke-width="1"/><path d="M6.500 1.500V3.800M8.500 1.500V3.800M10.500 1.500V3.800M4.500 2.500V4.500M3.500 11.500V14M5.500 11.500V14M7.500 11.500V14M9.500 11.500V14" stroke="#222" stroke-width="1"/><rect x="10.300" y="11.200" width="4" height="4" fill="#111"/><rect x="11.400" y="12" width="1.700" height="1.700" fill="#fff"/></svg>
<div class="t tree" id="tr7" style="left:672px;top:663px">AT89F51</div>
<div class="hdot" style="top:697px"></div>
<svg class="chip" style="left:645px;top:688px" width="15" height="16" viewBox="0 0 15 16"><path d="M4.600 .8H14.200V15.200H.8V4.600z" fill="#fff" stroke="#111" stroke-width="1.600"/><path d="M.5 14.400H15M13.900 .5V15.500" stroke="#111" stroke-width="2.200"/><path d="M1.500 6.500H3.800M1.500 8.500H3.800M1.500 10.500H3.800M1.500 12.500H3.800M11 4.500H13.500M11 6.500H13.500M11 8.500H13.500M11 10.500H13.500" stroke="#222" stroke-width="1"/><path d="M6.500 1.500V3.800M8.500 1.500V3.800M10.500 1.500V3.800M4.500 2.500V4.500M3.500 11.500V14M5.500 11.500V14M7.500 11.500V14M9.500 11.500V14" stroke="#222" stroke-width="1"/><rect x="10.300" y="11.200" width="4" height="4" fill="#111"/><rect x="11.400" y="12" width="1.700" height="1.700" fill="#fff"/></svg>
<div class="t tree" id="tr8" style="left:672px;top:688px">AT89F52</div>
<div class="hdot" style="top:722px"></div>
<svg class="chip" style="left:645px;top:713px" width="15" height="16" viewBox="0 0 15 16"><path d="M4.600 .8H14.200V15.200H.8V4.600z" fill="#fff" stroke="#111" stroke-width="1.600"/><path d="M.5 14.400H15M13.900 .5V15.500" stroke="#111" stroke-width="2.200"/><path d="M1.500 6.500H3.800M1.500 8.500H3.800M1.500 10.500H3.800M1.500 12.500H3.800M11 4.500H13.500M11 6.500H13.500M11 8.500H13.500M11 10.500H13.500" stroke="#222" stroke-width="1"/><path d="M6.500 1.500V3.800M8.500 1.500V3.800M10.500 1.500V3.800M4.500 2.500V4.500M3.500 11.500V14M5.500 11.500V14M7.500 11.500V14M9.500 11.500V14" stroke="#222" stroke-width="1"/><rect x="10.300" y="11.200" width="4" height="4" fill="#111"/><rect x="11.400" y="12" width="1.700" height="1.700" fill="#fff"/></svg>
<div class="t tree" id="tr9" style="left:672px;top:713px">AT89LP2052</div>
<div class="abs" style="left:876px;top:485px;width:455px;height:251px;background:#f0f0f0;border-left:1px solid #fff;border-top:1px solid #fff;border-right:2px solid #7a7a7a;border-bottom:2px solid #7a7a7a"></div>
<div class="abs" style="left:878px;top:487px;width:450px;height:246px;background:#f0f0f0;border-left:2px solid #6e6e6e;border-top:2px solid #6e6e6e;border-right:1px solid #fff;border-bottom:1px solid #fff"></div>
<div class="abs" style="left:1303px;top:489px;width:23px;height:220px;background:#f3f3f3"></div>
<div class="abs" style="left:880px;top:709px;width:446px;height:22px;background:#f3f3f3;border-top:1px solid #fff"></div>
<svg style="left:1308px;top:496px" width="11" height="7" viewBox="0 0 11 7"><path d="M1 6L5.500 1.500 10 6" fill="none" stroke="#bdbdbd" stroke-width="1.600"/></svg>
<svg style="left:1308px;top:694px" width="11" height="7" viewBox="0 0 11 7"><path d="M1 1L5.500 5.500 10 1" fill="none" stroke="#bdbdbd" stroke-width="1.600"/></svg>
<svg style="left:886px;top:714px" width="7" height="11" viewBox="0 0 7 11"><path d="M6 1L1.500 5.500 6 10" fill="none" stroke="#bdbdbd" stroke-width="1.600"/></svg>
<svg style="left:1288px;top:714px" width="7" height="11" viewBox="0 0 7 11"><path d="M1 1L5.500 5.500 1 10" fill="none" stroke="#bdbdbd" stroke-width="1.600"/></svg>
<div class="t ms" id="d0" style="letter-spacing:-1.000px;word-spacing:1.25px;left:882px;top:489px">8051-based Fullly Static 24MHz CMOS controller with 32&nbsp; I/O Lines,</div>
<div class="t ms" id="d1" style="letter-spacing:-0.915px;word-spacing:1.52px;left:882px;top:505px">3 Timers/Counters, 8 Interrupts/2 Priority Levels, UART,</div>
<div class="t ms" id="d2" style="letter-spacing:-1.140px;word-spacing:1.31px;left:882px;top:521px">Three-Level Program Memory Lock, 8K Bytes Flash Memory,</div>
<div class="t ms" id="d3" style="letter-spacing:-1.160px;word-spacing:1.33px;left:882px;top:537px">128 Bytes On-chip RAM</div>
<div class="btn sim" style="left:839px;top:768px;width:115px"><span style="display:inline-block;transform:scaleX(.76);letter-spacing:0">OK</span></div>
<div class="btn sim" style="left:966px;top:768px;width:116px">Cancel</div>
<div class="btn sim" style="left:1228px;top:768px;width:115px">Help</div>
<svg style="left:632px;top:580px" width="229" height="36" viewBox="0 0 229 36"><rect x=".85" y=".85" width="227.300" height="34.300" fill="none" stroke="#dc262c" stroke-width="1.700"/></svg>
<svg style="left:831px;top:751px" width="132" height="55" viewBox="0 0 132 55"><rect x=".85" y=".85" width="130.300" height="53.300" fill="none" stroke="#dc262c" stroke-width="1.700"/></svg>
<div class="badge" style="left:863px;top:584px">1</div>
<div class="badge" style="left:963px;top:729.500px">2</div>
<!-- DIALOG-END -->
</body>
</html>
